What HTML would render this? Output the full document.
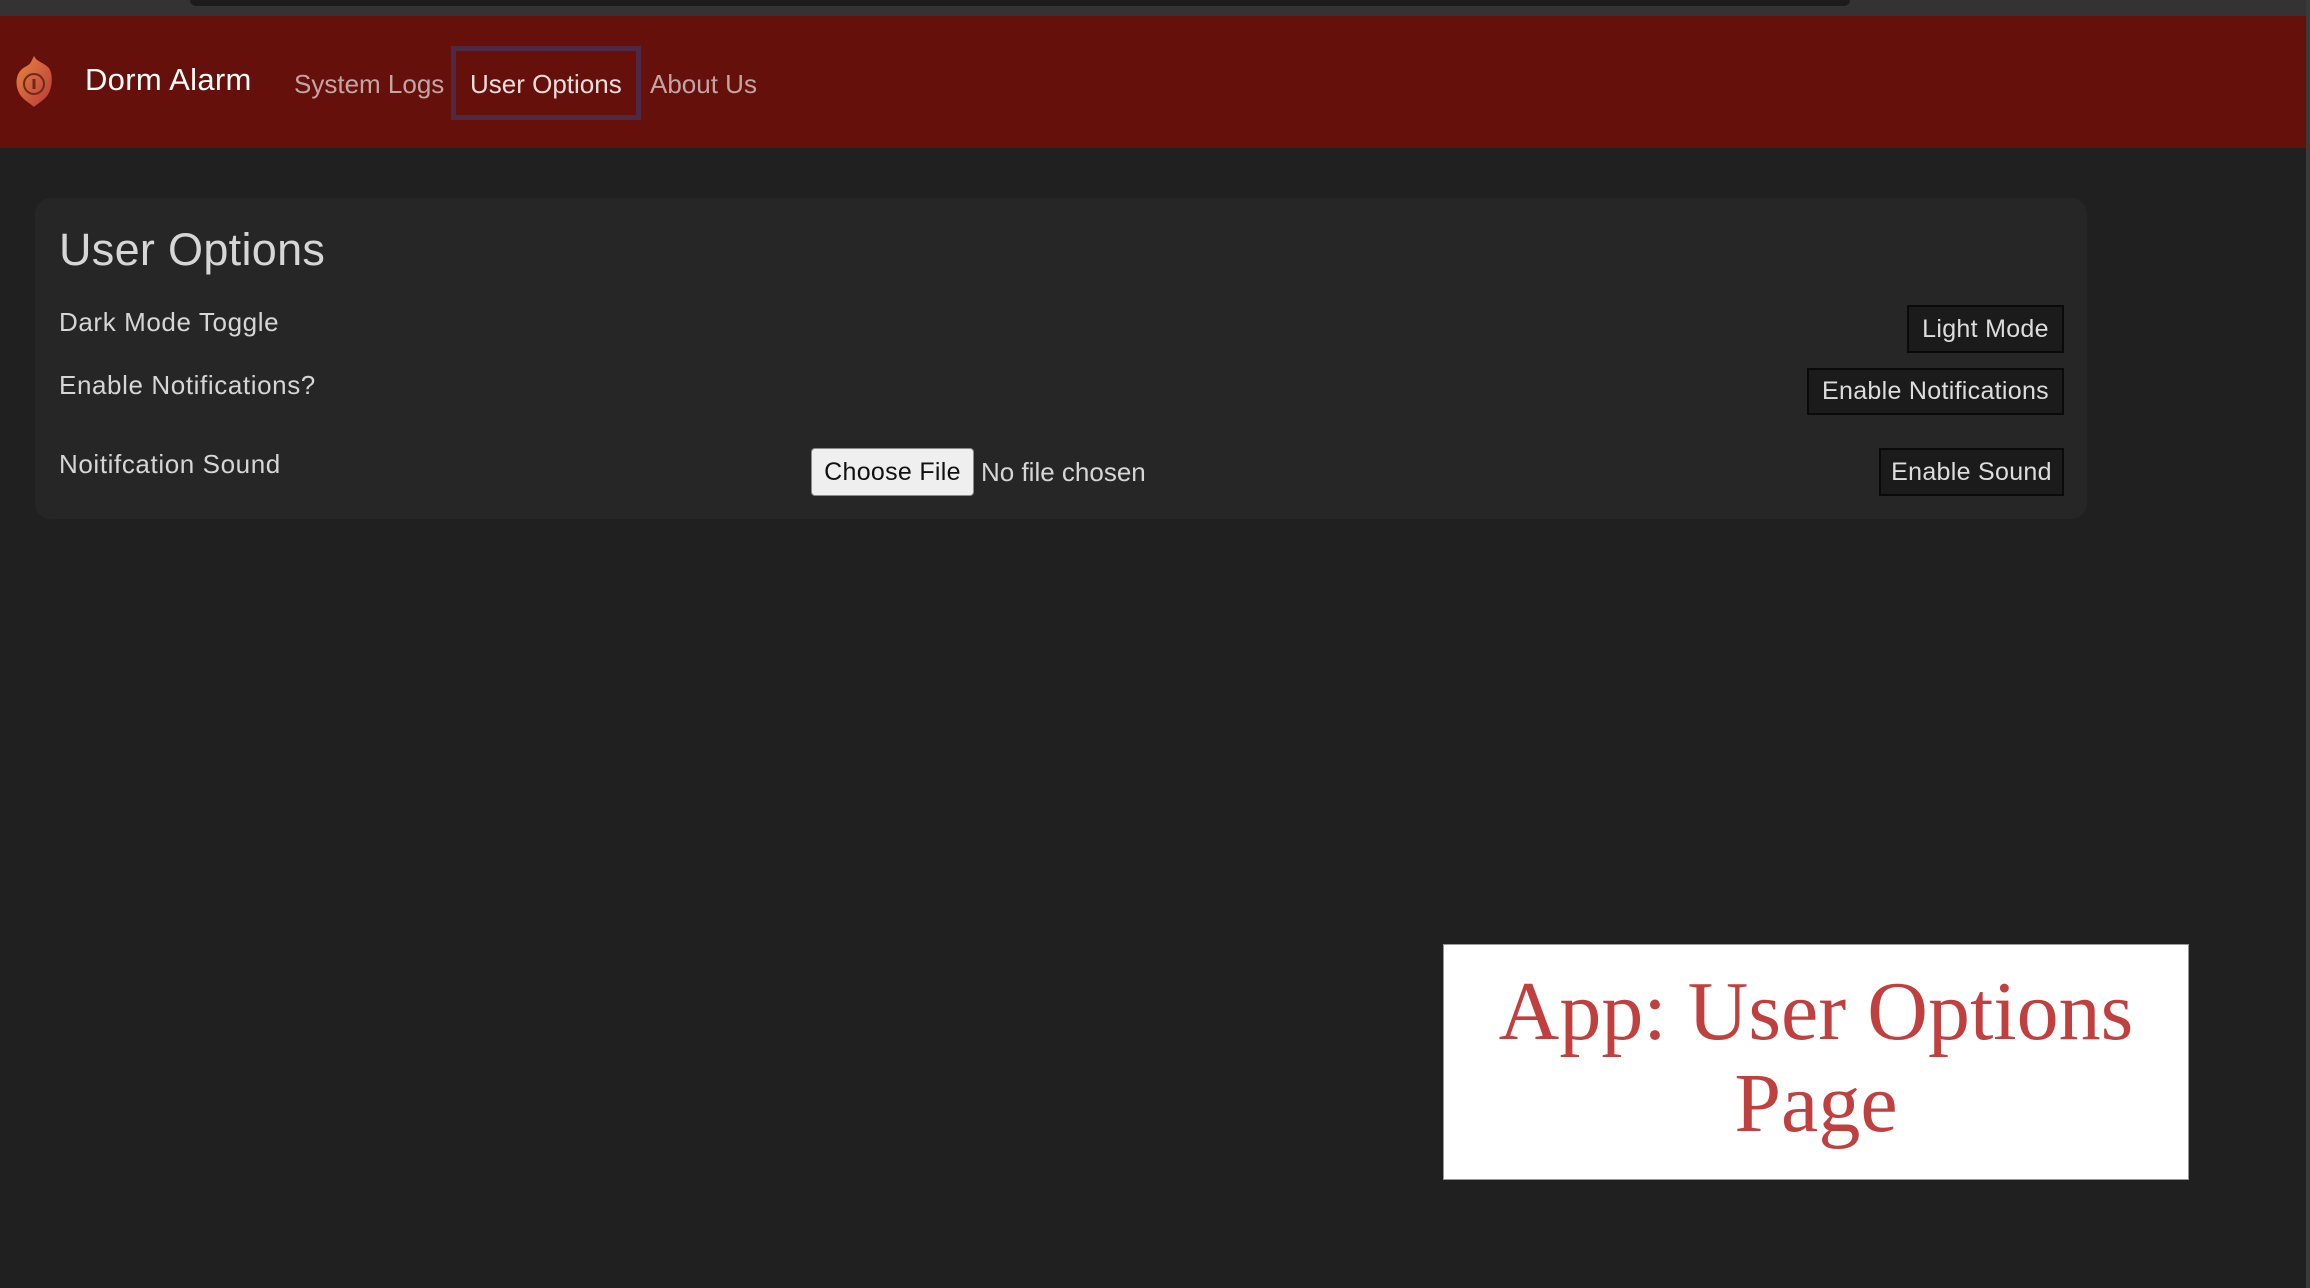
<!DOCTYPE html>
<html><head><style>
*{margin:0;padding:0;box-sizing:border-box}
body{width:2310px;height:1288px;background:#202020;font-family:"Liberation Sans",sans-serif;position:relative;overflow:hidden}
.top{position:absolute;left:0;top:0;width:2310px;height:16px;background:#333}
.top:before{content:"";position:absolute;left:190px;top:0;width:1660px;height:6px;background:#1c1c1c;border-radius:0 0 8px 8px}
.nav{position:absolute;left:0;top:16px;width:2306px;height:132px;background:#65100b}
.edge{position:absolute;right:0;top:0;width:4px;height:1288px;background:#3a3a3a}
.t{position:absolute;white-space:nowrap}
.card{position:absolute;left:35px;top:198px;width:2052px;height:321px;background:#262626;border-radius:16px}
.btn{position:absolute;background:#1b1b1b;border:2px solid #0a0a0a;color:#ddd;font-size:25px;display:flex;align-items:center;justify-content:center;letter-spacing:0.3px}
.lab{color:#d6d6d6;font-size:26px;letter-spacing:0.6px}
</style></head><body>
<div class="top"></div>
<div class="nav"></div>
<div class="edge"></div>
<svg style="position:absolute;left:13px;top:54px" width="42" height="54" viewBox="0 0 42 54">
<defs><linearGradient id="g" x1="0" y1="0" x2="1" y2="1"><stop offset="0" stop-color="#e9863e"/><stop offset="1" stop-color="#b8383a"/></linearGradient></defs>
<path d="M21 2 C24 8 30 8 36 14 C40 20 40 34 34 42 C30 47 24 50 21 53 C18 50 12 47 8 42 C2 34 2 22 8 16 C12 12 16 12 18 8 C19 6 20 4 21 2Z" fill="url(#g)"/>
<circle cx="21" cy="30" r="10" fill="none" stroke="#6a2a1a" stroke-width="2"/>
<rect x="19.5" y="25" width="3" height="10" fill="#6a2a1a"/>
</svg>
<div class="t" style="left:85px;top:62px;font-size:31px;color:#fff;letter-spacing:0.3px">Dorm Alarm</div>
<div class="t" style="left:294px;top:69px;font-size:26px;color:#c4a5a3">System Logs</div>
<div style="position:absolute;left:451px;top:46px;width:190px;height:74px;border:5px solid #4d2944"></div>
<div class="t" style="left:470px;top:69px;font-size:26px;color:#eedcdc">User Options</div>
<div class="t" style="left:650px;top:69px;font-size:26px;color:#c4a5a3">About Us</div>
<div class="card"></div>
<div class="t" style="left:59px;top:224px;font-size:45px;color:#d6d6d6;letter-spacing:0.3px">User Options</div>
<div class="t lab" style="left:59px;top:307px">Dark Mode Toggle</div>
<div class="t lab" style="left:59px;top:370px">Enable Notifications?</div>
<div class="t lab" style="left:59px;top:449px">Noitifcation Sound</div>
<div class="btn" style="left:1907px;top:305px;width:157px;height:48px">Light Mode</div>
<div class="btn" style="left:1807px;top:368px;width:257px;height:47px">Enable Notifications</div>
<div class="btn" style="left:1879px;top:448px;width:185px;height:48px">Enable Sound</div>
<div class="btn" style="left:811px;top:448px;width:163px;height:48px;background:#efefef;border:1px solid #8a8a8a;border-radius:4px;color:#111">Choose File</div>
<div class="t" style="left:981px;top:457px;font-size:26px;color:#d6d6d6">No file chosen</div>
<div style="position:absolute;left:1443px;top:944px;width:746px;height:236px;background:#fff;border:1px solid #999"></div>
<div class="t" style="left:1443px;width:746px;text-align:center;top:966px;font-family:'Liberation Serif',serif;font-size:84px;color:#c0403f;line-height:92px">App: User Options<br>Page</div>
</body></html>
